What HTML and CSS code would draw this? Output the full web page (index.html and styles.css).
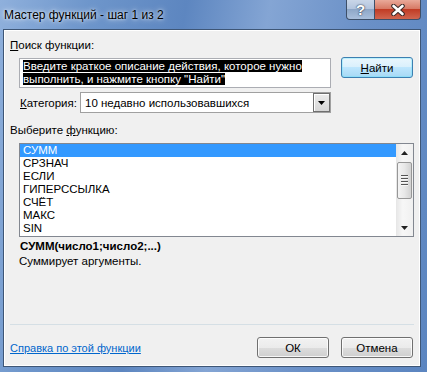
FILE: index.html
```html
<!DOCTYPE html>
<html>
<head>
    <meta charset="utf-8">
    <link rel="stylesheet" href="styles.css">
</head>
<body>
    <div class="window">
        <div class="titlebar">
            <span class="title">Мастер функций - шаг 1 из 2</span>
            <div class="caption-buttons">
                <div class="cap-btn help-btn">?</div>
                <div class="cap-btn close-btn">
                    <svg width="16" height="12" viewBox="0 0 16 12">
                        <path d="M3.5 2 L12.5 10 M12.5 2 L3.5 10" stroke="#3a2a28" stroke-width="4.6" stroke-linecap="round"/>
                        <path d="M3.5 2 L12.5 10 M12.5 2 L3.5 10" stroke="#ffffff" stroke-width="2.6" stroke-linecap="round"/>
                    </svg>
                </div>
            </div>
        </div>

        <div class="client">
            <div class="label"><u>П</u>оиск функции:</div>

            <div class="search-row">
                <div class="search-box">
                    <span class="sel">Введите краткое описание действия, которое нужно</span><br>
                    <span class="sel">выполнить, и нажмите кнопку "Найти"</span>
                </div>
                <div class="btn btn-default"><u>Н</u>айти</div>
            </div>

            <div class="category-row">
                <div class="category-label"><u>К</u>атегория:</div>
                <div class="combo">
                    <span class="combo-text">10 недавно использовавшихся</span>
                    <div class="combo-arrow">
                        <svg width="7" height="4" viewBox="0 0 7 4"><path d="M0 0 H7 L3.5 4 Z" fill="#000"/></svg>
                    </div>
                </div>
            </div>

            <div class="label list-label">Выберите <u>ф</u>ункцию:</div>

            <div class="listbox">
                <div class="list-items">
                    <div class="list-item selected">СУММ</div>
                    <div class="list-item">СРЗНАЧ</div>
                    <div class="list-item">ЕСЛИ</div>
                    <div class="list-item">ГИПЕРССЫЛКА</div>
                    <div class="list-item">СЧЁТ</div>
                    <div class="list-item">МАКС</div>
                    <div class="list-item">SIN</div>
                </div>
                <div class="scrollbar">
                    <div class="scroll-arrow">
                        <svg width="7" height="4" viewBox="0 0 7 4"><path d="M0 4 H7 L3.5 0 Z" fill="#222"/></svg>
                    </div>
                    <div class="scroll-track">
                        <div class="scroll-thumb">
                            <div class="grip"></div>
                            <div class="grip"></div>
                            <div class="grip"></div>
                            <div class="grip"></div>
                        </div>
                    </div>
                    <div class="scroll-arrow">
                        <svg width="7" height="4" viewBox="0 0 7 4"><path d="M0 0 H7 L3.5 4 Z" fill="#222"/></svg>
                    </div>
                </div>
            </div>

            <div class="signature">СУММ(число1;число2;...)</div>
            <div class="description">Суммирует аргументы.</div>

            <div class="footer">
                <div class="separator"></div>
                <div class="footer-row">
                    <a class="help-link" href="#">Справка по этой функции</a>
                    <div class="footer-buttons">
                        <div class="btn">ОК</div>
                        <div class="btn">Отмена</div>
                    </div>
                </div>
            </div>
        </div>
    </div>
</body>
</html>
```

FILE: styles.css
```css
body {
    margin: 0;
    font-family: 'Liberation Sans', Arial, sans-serif;
    font-size: 11.5px;
    color: #000;
}

.window {
    width: 427px;
    height: 372px;
    display: flex;
    flex-direction: column;
    background: linear-gradient(100deg, #8fb0dc 0%, #6e96cb 18%, #5d86c0 38%, #84a5d4 55%, #6a90c7 75%, #5b85c0 100%);
    overflow: hidden;
}

.titlebar {
    height: 29px;
    display: flex;
    justify-content: space-between;
    align-items: flex-start;
    flex-shrink: 0;
}

.title {
    font-size: 12px;
    line-height: 16px;
    margin: 7px 0 0 4px;
    text-shadow: 0 0 6px rgba(255, 255, 255, 0.9), 0 0 3px rgba(255, 255, 255, 0.7);
}

.caption-buttons {
    display: flex;
    margin-right: 6px;
}

.cap-btn {
    height: 19px;
    border: 1px solid #3d4f68;
    border-top: none;
    display: flex;
    align-items: center;
    justify-content: center;
}

.help-btn {
    width: 27px;
    border-radius: 0 0 0 4px;
    background: linear-gradient(#c9d6e8 0%, #b3c5de 45%, #8ea7c7 50%, #a9bfdc 100%);
    color: #fff;
    font-weight: bold;
    font-size: 15px;
    text-shadow: 0 0 2px #2d3b50, 0 0 1px #2d3b50;
}

.close-btn {
    width: 45px;
    border-left: none;
    border-radius: 0 0 4px 0;
    background: linear-gradient(#e9a999 0%, #d77a66 45%, #c13c25 50%, #d06650 100%);
}

.client {
    flex: 1;
    margin: 0 6px 5px 3px;
    border: 1px solid #3e5676;
    box-shadow: inset 0 0 0 1px #ffffff;
    background: #f0f0f0;
    padding: 9px 6px 8px 6px;
    display: flex;
    flex-direction: column;
}

.label {
    line-height: 13px;
}

.search-row {
    display: flex;
    align-items: flex-start;
    margin: 5px 0 0 9px;
}

.search-box {
    width: 312px;
    height: 30px;
    box-sizing: border-box;
    margin-top: 1px;
    border: 1px solid #abadb3;
    background: #fff;
    padding: 1px 3px;
    line-height: 13px;
    white-space: nowrap;
}

.sel {
    background: #000;
    color: #fff;
}

.btn {
    width: 72px;
    height: 21px;
    box-sizing: border-box;
    border: 1px solid #707070;
    border-radius: 3px;
    background: linear-gradient(#f2f2f2 0%, #ebebeb 50%, #dddddd 50%, #cfcfcf 100%);
    box-shadow: inset 0 0 0 1px rgba(255, 255, 255, 0.8);
    display: flex;
    align-items: center;
    justify-content: center;
}

.btn-default {
    margin-left: 10px;
    border-color: #3c7fb1;
    background: linear-gradient(#eaf6fd 0%, #d9f0fc 50%, #bee6fd 50%, #a7d9f5 100%);
    box-shadow: inset 0 0 0 1px #5ee6fb55;
}

.category-row {
    display: flex;
    align-items: center;
    margin: 4px 0 0 10px;
}

.category-label {
    width: 60px;
}

.combo {
    width: 251px;
    height: 21px;
    box-sizing: border-box;
    border: 1px solid #a0a0a0;
    background: #fff;
    display: flex;
    align-items: center;
    justify-content: space-between;
}

.combo-text {
    padding-left: 4px;
}

.combo-arrow {
    width: 17px;
    height: 19px;
    box-sizing: border-box;
    border: 1px solid #6f6f6f;
    background: linear-gradient(#ececec, #d6d6d6);
    box-shadow: inset 1px 1px 0 #fff;
    display: flex;
    align-items: center;
    justify-content: center;
}

.list-label {
    margin-top: 11px;
}

.listbox {
    width: 395px;
    height: 94px;
    box-sizing: border-box;
    margin: 6px 0 0 9px;
    border: 1px solid #828790;
    background: #fff;
    display: flex;
}

.list-items {
    flex: 1;
}

.list-item {
    height: 13px;
    line-height: 13px;
    padding-left: 3px;
}

.list-item.selected {
    background: #3399ff;
    color: #fff;
}

.scrollbar {
    width: 17px;
    display: flex;
    flex-direction: column;
    background: linear-gradient(90deg, #e6e6e6, #f7f7f7 40%, #f0f0f0);
}

.scroll-arrow {
    height: 17px;
    display: flex;
    align-items: center;
    justify-content: center;
}

.scroll-track {
    flex: 1;
}

.scroll-thumb {
    margin: 1px 1px 0 1px;
    height: 37px;
    box-sizing: border-box;
    border: 1px solid #979797;
    border-radius: 2px;
    background: linear-gradient(90deg, #f4f4f4, #e8e8e8 50%, #d2d2d2);
    display: flex;
    flex-direction: column;
    align-items: center;
    justify-content: center;
    gap: 1px;
}

.grip {
    width: 7px;
    height: 1px;
    background: #555;
    border-bottom: 1px solid #f8f8f8;
}

.signature {
    font-weight: bold;
    line-height: 13px;
    margin: 3px 0 0 10px;
}

.description {
    line-height: 13px;
    margin: 2px 0 0 9px;
}

.footer {
    margin-top: auto;
}

.separator {
    height: 1px;
    background: #d5dfe5;
}

.footer-row {
    display: flex;
    align-items: center;
    justify-content: space-between;
    margin-top: 12px;
}

.help-link {
    color: #0066cc;
    font-size: 11px;
}

.footer-buttons {
    display: flex;
    gap: 12px;
    margin-right: 1px;
}
```
